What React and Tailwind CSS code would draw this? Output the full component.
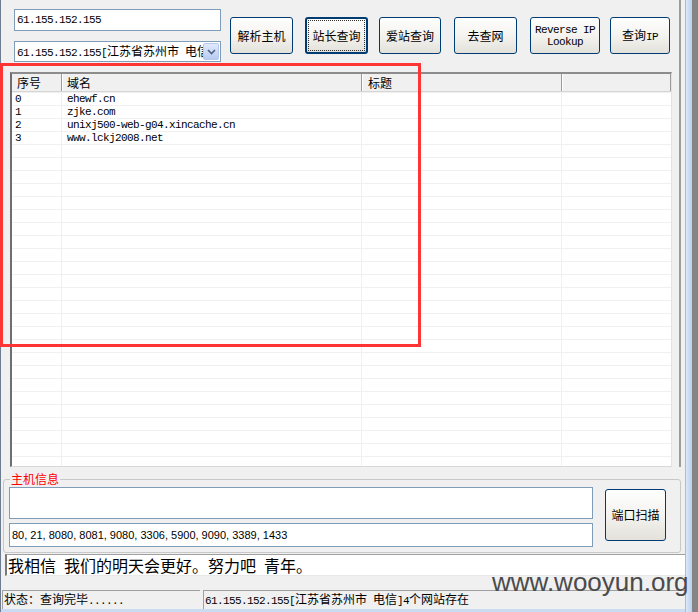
import React from "react";

const CJK = /([\u2e80-\u9fff\u3000-\u303f\uff00-\uffef]+)/;

// latin in a 6px mono cell, CJK at 12px like the old SimSun bitmap font
function Mixed({ text }) {
  return (
    <span className="whitespace-pre">
      {text.split(CJK).map((part, i) =>
        CJK.test(part) ? (
          <span key={i} className="font-['Noto_Sans_CJK_SC',sans-serif] text-[12px] tracking-normal">
            {part}
          </span>
        ) : (
          <span key={i}>{part}</span>
        )
      )}
    </span>
  );
}

const mono = "font-['Liberation_Mono','Noto_Sans_CJK_SC',monospace] text-[11px] tracking-[-0.6px]";
const cjk = "font-['Noto_Sans_CJK_SC',sans-serif] text-[12px]";

function Btn({ className, children, focus }) {
  return (
    <button
      className={`h-[37px] shrink-0 rounded-[3px] border border-[#003c74] bg-gradient-to-b from-[#fefefe] via-[#f4f3ef] to-[#e3e1da] text-black flex items-center justify-center ${className}`}
    >
      {focus ? (
        <span className="flex h-[31px] w-[57px] items-center justify-center border border-dotted border-[#333]">
          {children}
        </span>
      ) : (
        children
      )}
    </button>
  );
}

const rows = [
  ["0", "ehewf.cn"],
  ["1", "zjke.com"],
  ["2", "unixj500-web-g04.xincache.cn"],
  ["3", "www.lckj2008.net"],
];

export default function App() {
  return (
    <div className="relative flex h-[612px] w-[698px] overflow-hidden bg-[#f0f0f0] text-black">
      <div className="flex w-[685px] shrink-0 flex-col border-l border-[#6d7c90]">
        {/* upper panel: query controls + result list */}
        <div className="flex w-[680px] flex-col border-r-2 border-[#9c9c9c]">
          <div className="flex h-[72px]">
            <div className="ml-[13px] mt-[9px] flex w-[207px] flex-col">
              <div className={`flex h-[22px] items-center border border-[#7f9db9] bg-white pl-[2px] ${mono}`}>
                61.155.152.155
              </div>
              <div className="mt-[10px] flex h-[21px] items-center border border-[#7f9db9] bg-white pl-[2px]">
                <div className={`flex-1 overflow-hidden whitespace-nowrap leading-[17px] ${mono}`}>
                  <Mixed text="61.155.152.155[江苏省苏州市 电信]" />
                </div>
                <div className="mr-[1px] flex h-[17px] w-[16px] items-center justify-center rounded-[2px] border border-[#b5c8ec] bg-gradient-to-b from-[#e1eafc] to-[#b7cbf1]">
                  <svg width="9" height="6" viewBox="0 0 9 6">
                    <path d="M1 1 L4.5 4.5 L8 1" fill="none" stroke="#4d6185" strokeWidth="1.6" />
                  </svg>
                </div>
              </div>
            </div>
            <div className="ml-[9px] mt-[17px] flex items-start">
              <Btn className={`w-[63px] ${cjk}`}>解析主机</Btn>
              <Btn className={`ml-[12px] w-[63px] border-2 ${cjk}`} focus>
                站长查询
              </Btn>
              <Btn className={`ml-[11px] w-[62px] ${cjk}`}>爱站查询</Btn>
              <Btn className={`ml-[13px] w-[63px] ${cjk}`}>去查网</Btn>
              <Btn className={`ml-[13px] w-[70px] flex-col leading-[12px] ${mono}`}>
                <span>Reverse IP</span>
                <span>Lookup</span>
              </Btn>
              <Btn className={`ml-[10px] w-[60px] ${mono}`}>
                <Mixed text="查询IP" />
              </Btn>
            </div>
          </div>

          <div className="ml-[9px] flex h-[395px] w-[662px] flex-col overflow-hidden border-l-2 border-t-2 border-b border-r border-l-[#6e6e6e] border-t-[#8c8c8c] border-r-[#e3e3e3] border-b-[#d8d8d8] bg-white">
            <div className={`flex h-[18px] shrink-0 items-center border-b border-[#d5d5d5] bg-[#f0f0f0] leading-[17px] ${cjk}`}>
              <div className="h-full w-[50px] border-r border-[#9a9a9a] pl-[5px]">序号</div>
              <div className="h-full w-[300px] border-l border-r border-l-white border-r-[#9a9a9a] pl-[4px]">域名</div>
              <div className="h-full w-[200px] border-l border-r border-l-white border-r-[#9a9a9a] pl-[5px]">标题</div>
              <div className="h-full flex-1 border-l border-r border-l-white border-r-[#9a9a9a]" />
            </div>
            {Array.from({ length: 29 }).map((_, i) => {
              const r = rows[i] || ["", ""];
              return (
                <div key={i} className={`flex h-[13px] shrink-0 border-t border-[#f0f0f0] leading-[12px] ${mono}`}>
                  <div className="w-[50px] border-r border-[#f0f0f0] pl-[3px]">{r[0]}</div>
                  <div className="w-[300px] border-r border-[#f0f0f0] pl-[5px]">{r[1]}</div>
                  <div className="w-[200px] border-r border-[#f0f0f0]" />
                  <div className="flex-1" />
                </div>
              );
            })}
          </div>
        </div>

        {/* 主机信息 group */}
        <div className="relative ml-[2px] mt-[12px] flex h-[74px] w-[678px] rounded-[3px] border border-[#c8c8c8] pl-[5px] pt-[7px]">
          <span className={`absolute -top-[8px] left-[6px] bg-[#f0f0f0] px-[1px] leading-[14px] text-[#ff0000] ${cjk}`}>
            主机信息
          </span>
          <div className="flex w-[584px] flex-col">
            <div className="h-[32px] border border-[#7f9db9] bg-white" />
            <div className="mt-[4px] flex h-[24px] items-center border border-[#7f9db9] bg-white pl-[2px] font-['Liberation_Sans',sans-serif] text-[11px]">
              80, 21, 8080, 8081, 9080, 3306, 5900, 9090, 3389, 1433
            </div>
          </div>
          <button
            className={`ml-[12px] mt-[2px] flex h-[52px] w-[61px] items-center justify-center rounded-[3px] border border-[#003c74] bg-gradient-to-b from-[#fefefe] via-[#f4f3ef] to-[#e3e1da] ${cjk}`}
          >
            端口扫描
          </button>
        </div>

        <div className="ml-[4px] mt-[1px] flex h-[22px] w-[680px] items-center border-l-2 border-t border-b border-l-[#7a7a7a] border-t-[#a0a0a0] border-b-[#e8e8e8] bg-white pl-[1px] font-['Noto_Sans_CJK_SC',sans-serif] text-[16px] leading-[20px]">
          <span>我相信{"\u2002"}我们的明天会更好。努力吧{"\u2002"}青年。</span>
        </div>

        <div className={`mt-[14px] flex h-[19px] ${mono}`}>
          <div className="ml-[1px] flex w-[198px] items-center border-l border-t border-[#a0a0a0] pl-[1px] leading-[16px]">
            <Mixed text="状态：查询完毕......" />
          </div>
          <div className="ml-[3px] flex flex-1 items-center border-l border-t border-[#a0a0a0] pl-[1px] leading-[16px]">
            <Mixed text="61.155.152.155[江苏省苏州市 电信]4个网站存在" />
          </div>
        </div>
        <div className="h-[3px] bg-[#c9dcf2]" />
      </div>

      {/* window frame + desktop behind */}
      <div className="w-[7px] shrink-0 border-l border-[#a9bdd6] bg-gradient-to-r from-[#dbe8f8] to-[#b9d0ee]" />
      <div className="w-[6px] shrink-0 bg-[#858585]" />

      {/* annotation + watermark overlays */}
      <div className="pointer-events-none absolute left-0 top-[63px] h-[284px] w-[421px] border-[3px] border-[#ff3535]" />
      <div className="pointer-events-none absolute left-[492px] top-[569px] font-['Liberation_Sans',sans-serif] text-[26px] leading-none text-[#4b4b4b]">
        www.wooyun.org
      </div>
    </div>
  );
}
